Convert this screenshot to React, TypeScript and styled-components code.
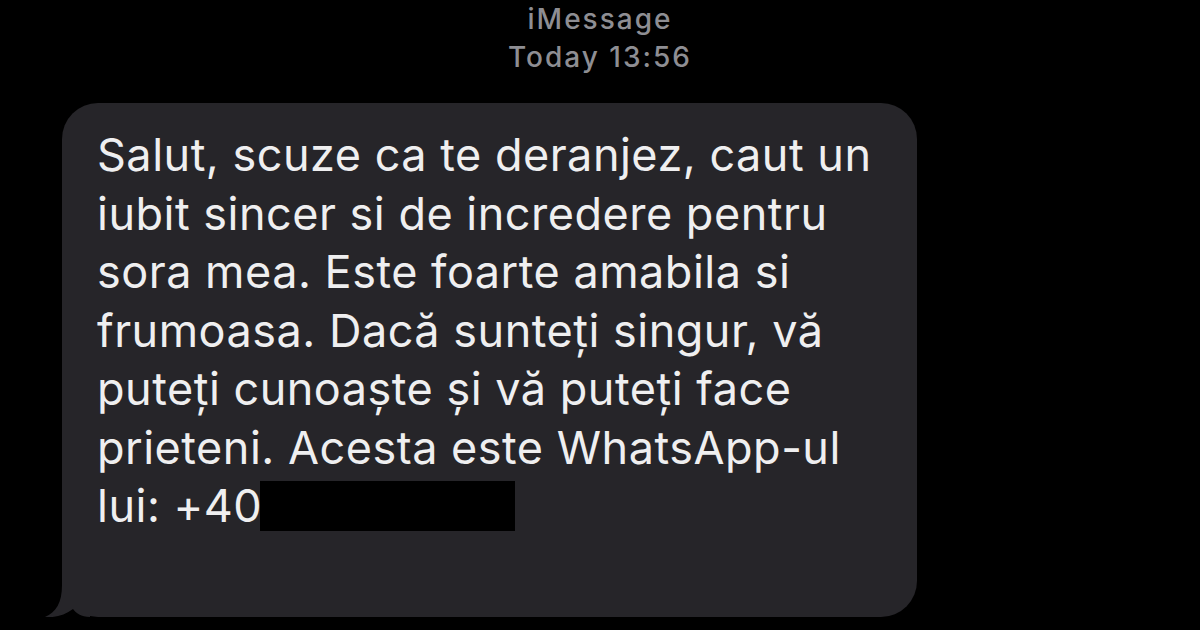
import React from "react";
import styled, {createGlobalStyle} from "styled-components";

const GlobalStyle = createGlobalStyle`
  html, body {
    margin: 0;
    padding: 0;
    background: #000;
  }
  body {
    width: 1200px;
    height: 630px;
    overflow: hidden;
    font-family: Inter, "Noto Sans", "Liberation Sans", sans-serif;
    -webkit-font-smoothing: antialiased;
  }
`;

const Screen = styled.div`
  width: 1200px;
  height: 630px;
  background: #000;
  display: flex;
  flex-direction: column;
`;

const Header = styled.div`
  display: flex;
  flex-direction: column;
  align-items: center;
  color: #8e8e93;
  font-size: 28px;
  font-weight: 500;
  line-height: 38px;
  letter-spacing: 2px;
`;

const Bubble = styled.div`
  position: relative;
  margin: 27px 0 0 62px;
  width: 855px;
  height: 514px;
  box-sizing: border-box;
  padding: 23px 0 0 35px;
  background: #262529;
  border-radius: 36px;
  color: #efeff0;
  font-size: 45px;
  line-height: 58.5px;
  letter-spacing: 0.5px;
`;

const Line = styled.div`
  white-space: nowrap;
`;

const Redacted = styled.span`
  display: inline-block;
  width: 255px;
  height: 50px;
  background: #000;
  vertical-align: -9px;
  margin-left: -2px;
`;

const Tail = styled.svg`
  position: absolute;
  left: -17px;
  bottom: 0;
  width: 45px;
  height: 40px;
`;

const lines = [
  "Salut, scuze ca te deranjez, caut un",
  "iubit sincer si de incredere pentru",
  "sora mea. Este foarte amabila si",
  "frumoasa. Dacă sunteți singur, vă",
  "puteți cunoaște și vă puteți face",
  "prieteni. Acesta este WhatsApp-ul",
];

const App = () => {
  return (
    <Screen>
      <GlobalStyle />
      <Header>
        <span>iMessage</span>
        <span>Today 13:56</span>
      </Header>
      <Bubble>
        {lines.map((text, index) => (
          <Line key={index}>{text}</Line>
        ))}
        <Line>
          lui: +40
          <Redacted />
        </Line>
        <Tail viewBox="-17 -40 45 40">
          <path
            d="M 0 -40 L 0 -32 C 0 -14 -6 -5 -17 0 C -7 1 3 -2 11 -8 C 14 -4 19 0 28 0 L 28 -40 Z"
            fill="#262529"
          />
        </Tail>
      </Bubble>
    </Screen>
  );
};

export default App;
